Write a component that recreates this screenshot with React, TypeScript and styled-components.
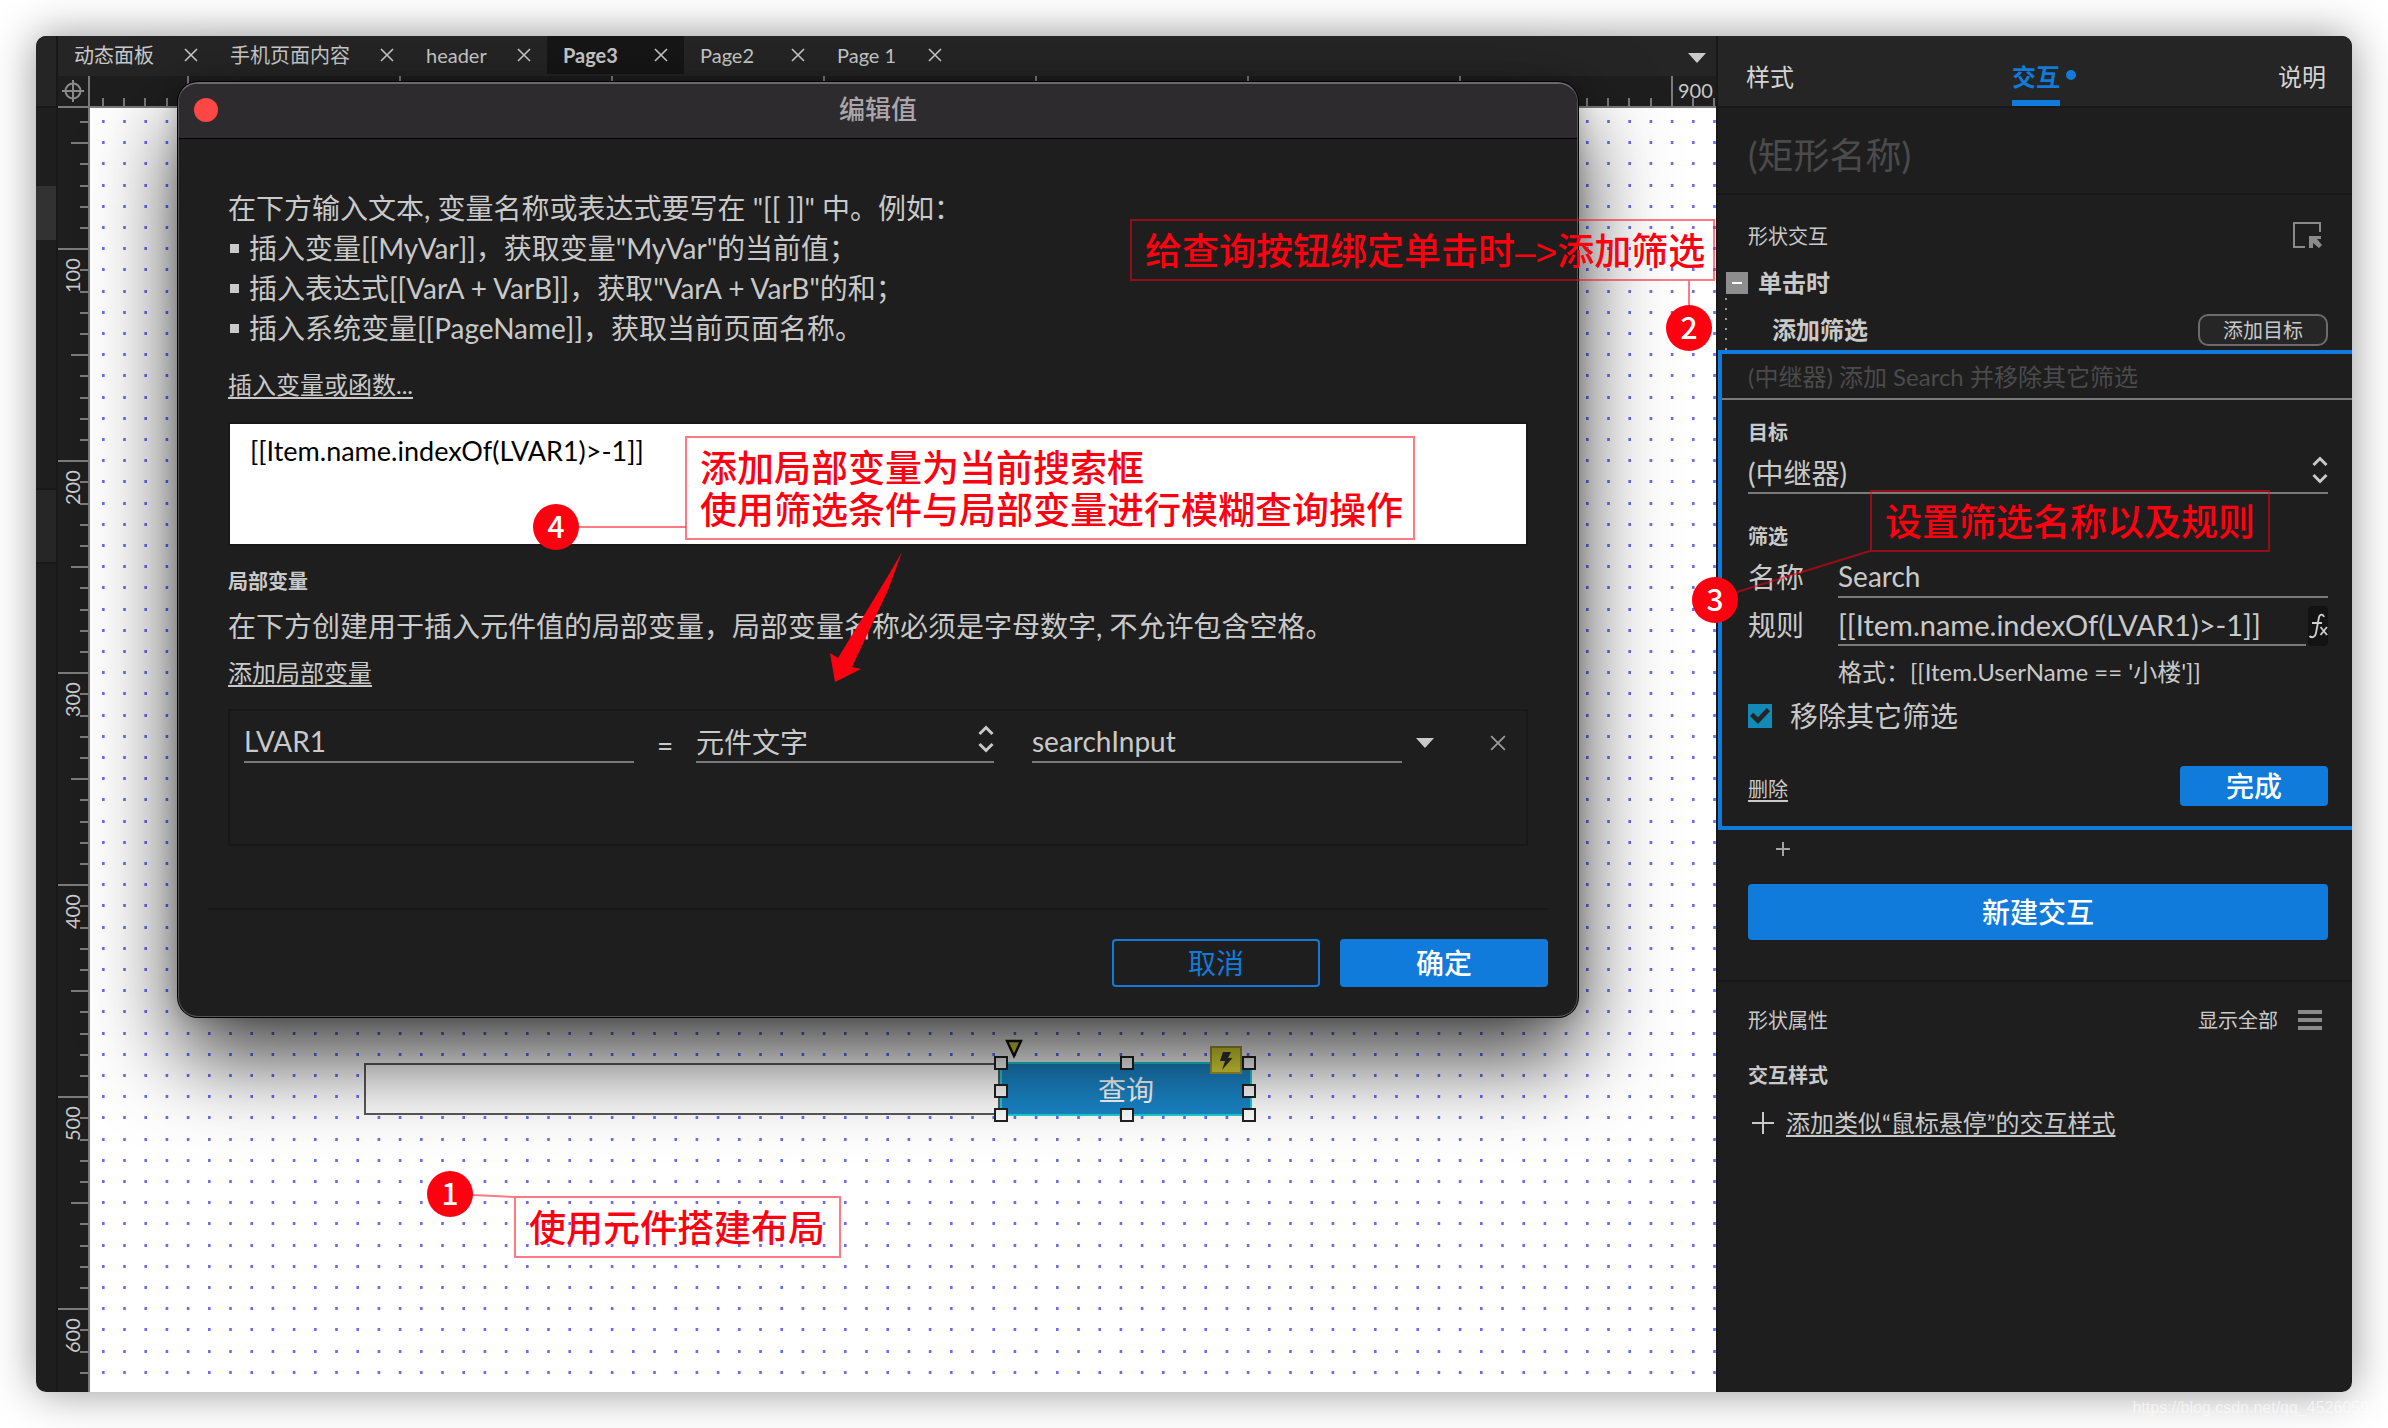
import React from 'react';
import styled, { createGlobalStyle, css } from 'styled-components';

const C = {
  panel: '#1e1e1e',
  bar: '#252525',
  edge: '#181818',
  text: '#c9c9c9',
  faint: '#4b4b4b',
  rule: '#7a7a7a',
  blue: '#107bdb',
  red: '#ff0010',
};

const Global = createGlobalStyle`
  *, *::before, *::after { box-sizing: border-box; }
  body {
    margin: 0;
    background: #fff;
    color: ${C.text};
    font-family: Lato, "Noto Sans CJK SC", sans-serif;
    font-size: 24px;
    line-height: 32px;
  }
  button, input, select, textarea { font: inherit; color: inherit; }
  h1, h2, h3, p, ul { margin: 0; padding: 0; font: inherit; }
`;

/* ---------- window frame ---------- */

const Page = styled.div`
  position: relative;
  min-height: 100vh;
  padding: 36px;
  display: flex;
  overflow: hidden;
`;

const WindowShadow = styled.div`
  flex: 1;
  min-width: 0;
  display: flex;
  border-radius: 10px;
  box-shadow: 0 0 44px rgba(0, 0, 0, 0.42);
`;

const Window = styled.div`
  flex: 1;
  min-width: 0;
  display: flex;
  border-radius: 10px;
  overflow: hidden;
  background: ${C.panel};
`;

const Sliver = styled.div`
  flex: none;
  width: 22px;
  border-right: 2px solid ${C.edge};
`;

const SliverPart = styled.div<{ $h: number; $bg?: string; $line?: boolean }>`
  height: ${p => p.$h}px;
  background: ${p => p.$bg ?? 'transparent'};
  border-bottom: ${p => (p.$line ? `2px solid ${C.edge}` : '0')};
`;

const Main = styled.main`
  flex: 1;
  min-width: 0;
  display: flex;
  flex-direction: column;
`;

/* ---------- shared parts ---------- */

const IconButton = styled.button`
  display: flex;
  align-items: center;
  justify-content: center;
  flex: none;
  padding: 0;
  border: 0;
  background: none;
`;

const Spacer = styled.div`
  flex: 1;
`;

const Cross = ({ size = 14, color = C.text }: { size?: number; color?: string }) => (
  <svg width={size} height={size} viewBox="0 0 14 14" fill="none" stroke={color} strokeWidth="1.6">
    <path d="M1 1 L13 13 M13 1 L1 13" />
  </svg>
);

const Caret = () => (
  <svg width="18" height="10" viewBox="0 0 18 10" fill={C.text}>
    <path d="M0 0 H18 L9 10 Z" />
  </svg>
);

const Plus = ({ size, color = C.text }: { size: number; color?: string }) => (
  <svg width={size} height={size} viewBox={`0 0 ${size} ${size}`} stroke={color} strokeWidth="2">
    <path d={`M0 ${size / 2} H${size} M${size / 2} 0 V${size}`} />
  </svg>
);

const Field = styled.input<{ $size?: number }>`
  flex: 1;
  min-width: 0;
  height: 40px;
  padding: 0 0 2px;
  border: 0;
  border-bottom: 2px solid ${C.rule};
  border-radius: 0;
  background: none;
  font-size: ${p => p.$size ?? 28}px;
`;

const SelectBox = styled.div<{ $w?: number }>`
  position: relative;
  flex: ${p => (p.$w ? 'none' : 1)};
  width: ${p => (p.$w ? `${p.$w}px` : 'auto')};
  height: 40px;
  border-bottom: 2px solid ${C.rule};
`;

const Select = styled.select`
  appearance: none;
  display: block;
  width: 100%;
  height: 38px;
  padding: 0;
  border: 0;
  background: none;
  font-size: 28px;
  line-height: 38px;
`;

const Chevrons = styled.svg`
  position: absolute;
  right: 0;
  top: 2px;
  pointer-events: none;
`;

const UpDown = () => (
  <Chevrons width="16" height="28" viewBox="0 0 16 28" fill="none" stroke={C.text} strokeWidth="3">
    <path d="M1.5 9 L8 2.5 L14.5 9 M1.5 19 L8 25.5 L14.5 19" />
  </Chevrons>
);

const Button = styled.button<{ $w?: number; $h: number; $ghost?: boolean }>`
  flex: ${p => (p.$w ? 'none' : 1)};
  width: ${p => (p.$w ? `${p.$w}px` : 'auto')};
  height: ${p => p.$h}px;
  padding: 0;
  border: 2px solid ${C.blue};
  border-radius: 4px;
  background: ${p => (p.$ghost ? 'transparent' : C.blue)};
  color: ${p => (p.$ghost ? C.blue : '#fff')};
  font-size: 28px;
  font-weight: ${p => (p.$ghost ? 400 : 500)};
  line-height: 32px;
`;

const Link = styled.a<{ $size?: number }>`
  color: inherit;
  font-size: ${p => p.$size ?? 24}px;
  text-decoration: underline;
  text-decoration-thickness: 2px;
  text-underline-offset: 3px;
  white-space: nowrap;
`;

const DeleteLink = styled(Link)`
  padding-top: 6px;
`;

const Rule = styled.hr`
  width: 100%;
  height: 2px;
  margin: 0;
  border: 0;
  background: ${C.edge};
`;

const Heading = styled.h2<{ $bold?: boolean; $size?: number }>`
  font-size: ${p => p.$size ?? 20}px;
  font-weight: ${p => (p.$bold ? 700 : 400)};
  line-height: 28px;
  white-space: nowrap;
`;

/* ---------- tabs ---------- */

const TabBar = styled.div`
  display: flex;
  align-items: flex-start;
  height: 40px;
  padding-right: 10px;
  background: ${C.bar};
  font-size: 20px;
  line-height: 38px;
`;

const Tab = styled.div<{ $active?: boolean }>`
  display: flex;
  align-items: center;
  gap: 30px;
  height: 38px;
  padding: 0 16px;
  white-space: nowrap;
  ${p => p.$active && css`
    background: #161616;
    font-weight: 700;
  `}
`;

const TabName = styled.span`
  min-width: 61px;
`;

const TabMenu = styled(IconButton)`
  height: 40px;
  padding-top: 4px;
`;

/* ---------- rulers and canvas ---------- */

const Board = styled.div`
  flex: 1;
  display: grid;
  grid-template: 32px 1fr / 32px 1fr;
`;

const Corner = styled.div`
  display: flex;
  align-items: center;
  justify-content: center;
  border-right: 2px solid ${C.rule};
  border-bottom: 2px solid ${C.rule};
`;

const TopRuler = styled.div`
  overflow: hidden;
  border-bottom: 2px solid ${C.rule};
`;

const SideRuler = styled.div`
  overflow: hidden;
  border-right: 2px solid ${C.rule};
`;

const Surface = styled.div`
  position: relative;
  overflow: hidden;
  background: #fff;
`;

const Drawing = styled.svg`
  display: block;
  width: 100%;
  height: 100%;
`;

const RulerText = styled.text`
  fill: ${C.text};
  font-family: Lato, sans-serif;
  font-size: 20px;
`;

const PITCH = 21.2;

const tickLength = (step: number) => (step % 10 === 0 ? 30 : step % 5 === 0 ? 17 : 8);

const HorizontalTicks = () => (
  <Drawing>
    {Array.from({ length: 100 }, (_, i) => {
      const length = tickLength(i + 16);
      return (
        <rect key={i} x={Math.round(12 + i * PITCH)} y={30 - length} width="2" height={length} fill={C.rule} />
      );
    })}
    <RulerText x="1588" y="22">900</RulerText>
  </Drawing>
);

const VerticalTicks = () => (
  <Drawing>
    {Array.from({ length: 80 }, (_, i) => {
      const length = tickLength(i + 4);
      return (
        <rect key={i} x={30 - length} y={Math.round(13 + i * PITCH)} width={length} height="2" fill={C.rule} />
      );
    })}
    {[100, 200, 300, 400, 500, 600].map((n, i) => (
      <RulerText key={n} transform={`translate(22 ${185 + i * 212}) rotate(-90)`}>{n}</RulerText>
    ))}
  </Drawing>
);

const GridDots = () => (
  <Drawing>
    {Array.from({ length: 80 }, (_, i) => (
      <line
        key={i}
        x1="12"
        x2="100%"
        y1={Math.round(13 + i * PITCH) + 0.5}
        y2={Math.round(13 + i * PITCH) + 0.5}
        stroke="#6a6afc"
        strokeWidth="3"
        strokeDasharray={`2.6 ${PITCH - 2.6}`}
      />
    ))}
  </Drawing>
);

const CanvasInput = styled.input`
  position: absolute;
  left: 274px;
  top: 955px;
  width: 636px;
  height: 52px;
  border: 2px solid #5c5a5c;
  background: #fff;
  color: #333;
`;

const QueryButton = styled.button`
  position: absolute;
  left: 910px;
  top: 954px;
  width: 252px;
  height: 54px;
  padding: 2px 0 0;
  border: 2px solid #1fd0d0;
  background: #1a86c8;
  color: #fff;
  font-size: 28px;
`;

const Handle = styled.span<{ $x: number; $y: number }>`
  position: absolute;
  left: ${p => p.$x - 7}px;
  top: ${p => p.$y - 7}px;
  width: 14px;
  height: 14px;
  border: 2px solid #222;
  background: #fff;
`;

const Marker = styled.svg<{ $x: number; $y: number }>`
  position: absolute;
  left: ${p => p.$x}px;
  top: ${p => p.$y}px;
`;

/* ---------- inspector ---------- */

const Inspector = styled.aside`
  flex: none;
  width: 636px;
  display: flex;
  flex-direction: column;
  border-left: 2px solid ${C.edge};
`;

const InspectorTabs = styled.div`
  display: flex;
  flex: none;
  justify-content: space-between;
  height: 72px;
  padding: 12px 26px 0 28px;
  background: ${C.bar};
  border-bottom: 2px solid ${C.edge};
`;

const InspectorTab = styled.button<{ $active?: boolean }>`
  position: relative;
  height: 58px;
  padding: 0;
  border: 0;
  background: none;
  color: ${p => (p.$active ? C.blue : '#d4d4d4')};
  font-weight: ${p => (p.$active ? 700 : 400)};
  ${p => p.$active && css`
    border-bottom: 6px solid ${C.blue};
    padding-top: 6px;
    &::after {
      content: '';
      position: absolute;
      right: -16px;
      top: 22px;
      width: 10px;
      height: 10px;
      border-radius: 50%;
      background: ${C.blue};
    }
  `}
`;

const NameField = styled.input`
  flex: none;
  height: 87px;
  padding: 8px 30px 0;
  border: 0;
  border-bottom: 2px solid ${C.edge};
  background: none;
  font-size: 36px;
  &::placeholder { color: ${C.faint}; opacity: 1; }
`;

const EventBlock = styled.section`
  position: relative;
  display: flex;
  flex-direction: column;
  gap: 13px;
  padding: 24px 0 3px;
  &::before {
    content: '';
    position: absolute;
    left: 7px;
    bottom: 0;
    height: 52px;
    width: 2px;
    background: repeating-linear-gradient(#a09a92 0 2px, transparent 2px 10px);
  }
`;

const Row = styled.div<{ $h?: number; $gap?: number; $l?: number; $r?: number }>`
  display: flex;
  flex: none;
  align-items: center;
  height: ${p => p.$h ?? 34}px;
  gap: ${p => p.$gap ?? 0}px;
  padding-left: ${p => p.$l ?? 30}px;
  padding-right: ${p => p.$r ?? 24}px;
`;

const Collapse = styled.button`
  display: flex;
  align-items: center;
  justify-content: center;
  width: 22px;
  height: 22px;
  padding: 0;
  border: 0;
  background: #8e8e8e;
  &::before {
    content: '';
    width: 10px;
    height: 2px;
    background: #fff;
  }
`;

const TargetButton = styled.button`
  width: 130px;
  height: 32px;
  padding: 0;
  border: 2px solid #6c6c6c;
  border-radius: 10px;
  background: #262626;
  font-size: 20px;
  line-height: 26px;
`;

const ActionCard = styled.section`
  display: flex;
  flex-direction: column;
  padding-bottom: 20px;
  border: 4px solid ${C.blue};
  border-right: 0;
`;

const Summary = styled.p`
  height: 46px;
  padding-left: 26px;
  border-bottom: 2px solid ${C.rule};
  color: ${C.faint};
  line-height: 46px;
`;

const Group = styled.div<{ $top: number; $gap?: number }>`
  display: flex;
  flex-direction: column;
  gap: ${p => p.$gap ?? 8}px;
  margin-top: ${p => p.$top}px;
`;

const CardRow = styled.div<{ $h?: number }>`
  display: flex;
  align-items: center;
  height: ${p => p.$h ?? 40}px;
  padding: 0 24px 0 26px;
`;

const Label = styled.label`
  width: 90px;
  padding-bottom: 2px;
  font-size: 28px;
  white-space: nowrap;
`;

const CheckLabel = styled.label`
  display: flex;
  align-items: center;
  gap: 18px;
  font-size: 28px;
`;

const Hint = styled.p`
  padding-left: 90px;
  white-space: nowrap;
`;

const FxButton = styled.button`
  flex: none;
  width: 20px;
  height: 40px;
  margin-left: 2px;
  padding: 0;
  border: 0;
  border-radius: 4px;
  background: #131313;
`;

const Check = styled.input`
  appearance: none;
  display: grid;
  place-items: center;
  width: 24px;
  height: 24px;
  margin: 0;
  background: #128ab5;
  &:checked::before {
    content: '';
    width: 20px;
    height: 20px;
    background: #252525;
    clip-path: polygon(0 50%, 16% 34%, 40% 56%, 84% 10%, 100% 26%, 40% 90%);
  }
`;

const NewRow = styled(Row)`
  margin: 16px 0 40px;
`;

const Properties = styled.section`
  padding-top: 21px;
`;

/* ---------- dialog ---------- */

const Dialog = styled.div`
  position: absolute;
  left: 178px;
  top: 82px;
  width: 1400px;
  border: 1px solid #565656;
  border-top: 2px solid #6a6a6a;
  border-radius: 20px;
  background: ${C.panel};
  box-shadow: 0 0 0 1px #000, 0 40px 88px rgba(0, 0, 0, 0.76), 0 0 20px rgba(0, 0, 0, 0.2);
  overflow: hidden;
`;

const TitleBar = styled.header`
  display: grid;
  grid-template-columns: 24px 1fr 24px;
  align-items: center;
  height: 55px;
  padding: 0 15px 2px;
  background: #2d2b2e;
  border-bottom: 1px solid #000;
`;

const CloseDot = styled.button`
  width: 24px;
  height: 24px;
  padding: 0;
  border: 0;
  border-radius: 50%;
  background: #fc4745;
`;

const DialogTitle = styled.h1`
  padding-bottom: 2px;
  color: #a9a7aa;
  font-size: 26px;
  font-weight: 500;
  line-height: 28px;
  text-align: center;
`;

const DialogBody = styled.div`
  display: flex;
  flex-direction: column;
  align-items: flex-start;
  padding: 49px 49px 62px;
`;

const Guide = styled.p`
  font-size: 28px;
  line-height: 40px;
  white-space: nowrap;
`;

const Bullets = styled.ul`
  list-style: none;
  font-size: 28px;
  line-height: 40px;
  margin-bottom: 21px;
`;

const Bullet = styled.li`
  display: flex;
  align-items: center;
  gap: 10px;
  padding-left: 2px;
  white-space: nowrap;
  &::before {
    content: '';
    width: 9px;
    height: 9px;
    background: ${C.text};
  }
`;

const Expression = styled.textarea`
  display: block;
  align-self: stretch;
  height: 124px;
  margin: 21px 0;
  padding: 11px 20px;
  border: 2px solid ${C.edge};
  background: #fff;
  color: #000;
  font-size: 27px;
  resize: none;
`;

const LocalText = styled(Guide)`
  margin: 11px 0;
`;

const Variables = styled.div`
  align-self: stretch;
  height: 137px;
  margin-top: 20px;
  padding: 12px 14px;
  border: 2px solid ${C.edge};
`;

const VariableRow = styled.div`
  display: flex;
  align-items: center;
  height: 40px;
  padding-right: 6px;
`;

const VarName = styled(Field)`
  flex: none;
  width: 390px;
`;

const Equals = styled.span`
  width: 62px;
  padding-top: 4px;
  font-size: 28px;
  text-align: center;
`;

const Source = styled(Field)`
  margin: 0 14px 0 38px;
`;

const RemoveButton = styled(IconButton)`
  margin-left: 56px;
`;

const DialogFooter = styled.footer`
  display: flex;
  flex-direction: column;
  align-items: flex-end;
  gap: 29px;
  padding: 0 29px 29px;
`;

const Actions = styled.div`
  display: flex;
  gap: 20px;
`;

/* ---------- annotations ---------- */

const Note = styled.div<{ $x: number; $y: number; $w: number }>`
  position: absolute;
  left: ${p => p.$x}px;
  top: ${p => p.$y}px;
  width: ${p => p.$w}px;
  padding: 11px 0 5px 13px;
  border: 2px solid rgba(255, 0, 20, 0.52);
  color: ${C.red};
  font-family: "Liberation Sans", "Noto Sans CJK SC", sans-serif;
  font-size: 37px;
  font-weight: 500;
  line-height: 42px;
  white-space: nowrap;
`;

const Badge = styled.div<{ $x: number; $y: number }>`
  position: absolute;
  left: ${p => p.$x - 23}px;
  top: ${p => p.$y - 23}px;
  width: 46px;
  height: 46px;
  border-radius: 50%;
  background: ${C.red};
  color: #fff;
  font-family: "Noto Sans CJK SC", sans-serif;
  font-size: 30px;
  font-weight: 500;
  line-height: 42px;
  text-align: center;
`;

const Leaders = styled.svg`
  position: absolute;
  left: 0;
  top: 0;
  pointer-events: none;
`;

const Watermark = styled.div`
  position: absolute;
  right: 10px;
  bottom: 8px;
  color: rgba(255, 255, 255, 0.6);
  font-family: "Liberation Sans", sans-serif;
  font-size: 16px;
  line-height: 24px;
  white-space: nowrap;
`;

const tabs = ['动态面板', '手机页面内容', 'header', 'Page3', 'Page2', 'Page 1'];

const handles = [
  [911, 955], [1037, 955], [1159, 955],
  [911, 983], [1159, 983],
  [911, 1007], [1037, 1007], [1159, 1007],
];

const EXPRESSION = '[[Item.name.indexOf(LVAR1)>-1]]';

const CanvasArea = () => (
  <Main>
    <TabBar>
      {tabs.map(name => (
        <Tab key={name} $active={name === 'Page3'}>
          <TabName>{name}</TabName>
          <IconButton aria-label="关闭"><Cross /></IconButton>
        </Tab>
      ))}
      <Spacer />
      <TabMenu aria-label="更多"><Caret /></TabMenu>
    </TabBar>
    <Board>
      <Corner>
        <svg width="24" height="24" viewBox="0 0 24 24" fill="none" stroke="#8a8a8a" strokeWidth="2">
          <circle cx="12" cy="12" r="7.5" />
          <path d="M12 1 V23 M1 12 H23" />
        </svg>
      </Corner>
      <TopRuler><HorizontalTicks /></TopRuler>
      <SideRuler><VerticalTicks /></SideRuler>
      <Surface>
        <GridDots />
        <CanvasInput aria-label="searchInput" />
        <QueryButton>查询</QueryButton>
        {handles.map(([x, y]) => <Handle key={`${x}-${y}`} $x={x} $y={y} />)}
        <Marker $x={915} $y={931} width="18" height="20" viewBox="0 0 18 20">
          <path d="M2 2 H16 L9 17 Z" fill="#e0d838" stroke="#111" strokeWidth="2.4" />
        </Marker>
        <Marker $x={1120} $y={938} width="32" height="28" viewBox="0 0 32 28">
          <rect x="1" y="1" width="30" height="26" fill="#e2de38" stroke="#a39f3a" strokeWidth="2" />
          <path d="M13 6 H21 L18 12 H22.5 L12 24 L15 15 H10 Z" fill="#333" />
        </Marker>
      </Surface>
    </Board>
  </Main>
);

const InspectorPanel = () => (
  <Inspector>
    <InspectorTabs>
      <InspectorTab>样式</InspectorTab>
      <InspectorTab $active>交互</InspectorTab>
      <InspectorTab>说明</InspectorTab>
    </InspectorTabs>
    <NameField aria-label="矩形名称" placeholder="(矩形名称)" />
    <EventBlock>
      <Row $r={30}>
        <Heading>形状交互</Heading>
        <Spacer />
        <IconButton aria-label="选择目标">
          <svg width="30" height="30" viewBox="0 0 30 30" fill="none">
            <path d="M13 26 H2 V2 H28 V11" stroke="#8a8a8a" strokeWidth="2" />
            <path d="M17 15 H29 V18 H25 L30 24 L27 27 L21 22 V27 H17 Z" fill="#8a8a8a" />
          </svg>
        </IconButton>
      </Row>
      <Row $l={8} $gap={10}>
        <Collapse aria-label="折叠" />
        <Heading $bold $size={24}>单击时</Heading>
      </Row>
      <Row $l={54}>
        <Heading $bold $size={24}>添加筛选</Heading>
        <Spacer />
        <TargetButton>添加目标</TargetButton>
      </Row>
    </EventBlock>
    <ActionCard>
      <Summary>(中继器) 添加 Search 并移除其它筛选</Summary>
      <Group $top={18}>
        <CardRow $h={28}><Heading $bold>目标</Heading></CardRow>
        <CardRow>
          <SelectBox>
            <Select aria-label="目标"><option>(中继器)</option></Select>
            <UpDown />
          </SelectBox>
        </CardRow>
      </Group>
      <Group $top={28}>
        <CardRow $h={28}><Heading $bold>筛选</Heading></CardRow>
        <CardRow>
          <Label htmlFor="filter-name">名称</Label>
          <Field id="filter-name" defaultValue="Search" />
        </CardRow>
      </Group>
      <Group $top={8} $gap={10}>
        <CardRow>
          <Label htmlFor="filter-rule">规则</Label>
          <Field id="filter-rule" $size={29} defaultValue={EXPRESSION} />
          <FxButton aria-label="fx">
            <svg width="20" height="40" viewBox="0 0 20 40" fill="none" stroke="#d0d0d0" strokeWidth="1.8">
              <path d="M16 11 C15 7.500 11.500 8 10.800 12 L8 27 C7.300 31 4 32.500 1.500 30 M4 17 H14" />
              <path d="M12.500 21 L19 29 M19 21 L12.500 29" />
            </svg>
          </FxButton>
        </CardRow>
        <CardRow $h={32}><Hint>格式：[[Item.UserName == '小楼']]</Hint></CardRow>
      </Group>
      <Group $top={12} $gap={34}>
        <CardRow $h={32}>
          <CheckLabel><Check type="checkbox" defaultChecked />移除其它筛选</CheckLabel>
        </CardRow>
        <CardRow>
          <DeleteLink href="#" $size={20}>删除</DeleteLink>
          <Spacer />
          <Button $w={148} $h={40}>完成</Button>
        </CardRow>
      </Group>
    </ActionCard>
    <Row $h={38} $l={58}>
      <IconButton aria-label="添加动作"><Plus size={14} color="#a4a4a4" /></IconButton>
    </Row>
    <NewRow $h={56}><Button $h={56}>新建交互</Button></NewRow>
    <Rule />
    <Properties>
      <Row $r={30} $gap={20}>
        <Heading>形状属性</Heading>
        <Spacer />
        <Heading as="span">显示全部</Heading>
        <IconButton aria-label="菜单">
          <svg width="24" height="20" viewBox="0 0 24 20" fill="#8a8a8a">
            <path d="M0 0 H24 V4 H0 Z M0 8 H24 V12 H0 Z M0 16 H24 V20 H0 Z" />
          </svg>
        </IconButton>
      </Row>
      <Row $h={76}><Heading $bold>交互样式</Heading></Row>
      <Row $h={20} $l={34} $gap={12}>
        <Plus size={22} />
        <Link href="#">添加类似“鼠标悬停”的交互样式</Link>
      </Row>
    </Properties>
  </Inspector>
);

const EditDialog = () => (
  <Dialog role="dialog" aria-label="编辑值">
    <TitleBar>
      <CloseDot aria-label="关闭" />
      <DialogTitle>编辑值</DialogTitle>
    </TitleBar>
    <DialogBody>
      <Guide>在下方输入文本, 变量名称或表达式要写在 "[[ ]]" 中。例如：</Guide>
      <Bullets>
        <Bullet>插入变量[[MyVar]]，获取变量"MyVar"的当前值；</Bullet>
        <Bullet>插入表达式[[VarA + VarB]]，获取"VarA + VarB"的和；</Bullet>
        <Bullet>插入系统变量[[PageName]]，获取当前页面名称。</Bullet>
      </Bullets>
      <Link href="#">插入变量或函数...</Link>
      <Expression aria-label="表达式" defaultValue={EXPRESSION} />
      <Heading $bold>局部变量</Heading>
      <LocalText>在下方创建用于插入元件值的局部变量，局部变量名称必须是字母数字, 不允许包含空格。</LocalText>
      <Link href="#">添加局部变量</Link>
      <Variables>
        <VariableRow>
          <VarName aria-label="变量名" defaultValue="LVAR1" />
          <Equals>=</Equals>
          <SelectBox $w={298}>
            <Select aria-label="类型"><option>元件文字</option></Select>
            <UpDown />
          </SelectBox>
          <Source aria-label="元件" defaultValue="searchInput" />
          <IconButton aria-label="展开"><Caret /></IconButton>
          <RemoveButton aria-label="移除"><Cross size={16} color="#9a9a9a" /></RemoveButton>
        </VariableRow>
      </Variables>
    </DialogBody>
    <DialogFooter>
      <Rule />
      <Actions>
        <Button $w={208} $h={48} $ghost>取消</Button>
        <Button $w={208} $h={48}>确定</Button>
      </Actions>
    </DialogFooter>
  </Dialog>
);

const Annotations = () => (
  <>
    <Leaders width="2388" height="1428" fill="none" stroke="rgba(255,0,20,0.52)" strokeWidth="2">
      <path d="M472 1195 L514 1197" />
      <path d="M1689 281 V306" />
      <path d="M1737 592 L1870 551" />
      <path d="M578 527 H686" />
      <path
        d="M902 552 L888 576 L838 658 L830 653 L835 682 L861 669 L852 667 L888 590 Z"
        fill={C.red}
        stroke="none"
      />
    </Leaders>
    <Note $x={514} $y={1196} $w={327}>使用元件搭建布局</Note>
    <Note $x={1130} $y={219} $w={585}>给查询按钮绑定单击时–&gt;添加筛选</Note>
    <Note $x={1870} $y={490} $w={400}>设置筛选名称以及规则</Note>
    <Note $x={685} $y={436} $w={730}>
      添加局部变量为当前搜索框<br />使用筛选条件与局部变量进行模糊查询操作
    </Note>
    <Badge $x={450} $y={1194}>1</Badge>
    <Badge $x={1689} $y={328}>2</Badge>
    <Badge $x={1715} $y={600}>3</Badge>
    <Badge $x={556} $y={527}>4</Badge>
  </>
);

export default function App() {
  return (
    <>
      <Global />
      <Page>
        <WindowShadow>
          <Window>
            <Sliver>
              <SliverPart $h={72} $bg={C.bar} $line />
              <SliverPart $h={78} />
              <SliverPart $h={54} $bg="#323232" />
              <SliverPart $h={250} $line />
              <SliverPart $h={74} $bg="#262626" $line />
            </Sliver>
            <CanvasArea />
            <InspectorPanel />
          </Window>
        </WindowShadow>
        <EditDialog />
        <Annotations />
        <Watermark>https://blog.csdn.net/qq_45260597</Watermark>
      </Page>
    </>
  );
}
